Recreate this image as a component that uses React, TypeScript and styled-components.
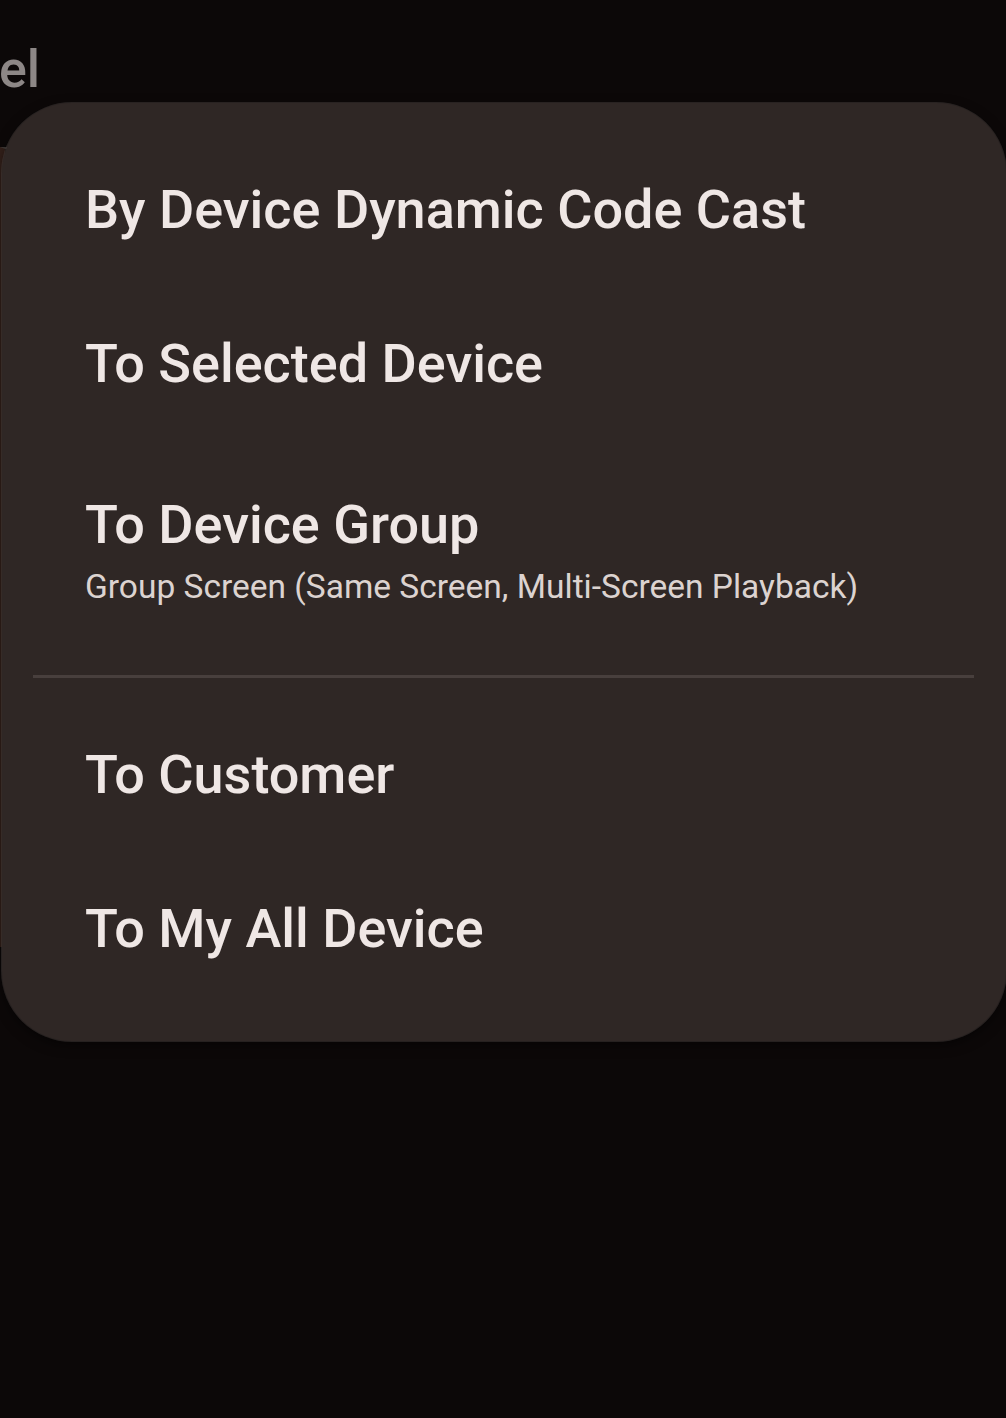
import React from 'react';
import styled, { createGlobalStyle } from 'styled-components';

const GlobalStyle = createGlobalStyle`
  html, body {
    margin: 0;
    padding: 0;
    background: #0c0808;
    overflow: hidden;
  }
  * {
    box-sizing: border-box;
  }
`;

interface MenuEntry {
  title: string;
  subtitle?: string;
  dividerAfter?: boolean;
}

const entries: MenuEntry[] = [
  { title: 'By Device Dynamic Code Cast' },
  { title: 'To Selected Device' },
  {
    title: 'To Device Group',
    subtitle: 'Group Screen (Same Screen, Multi-Screen Playback)',
    dividerAfter: true,
  },
  { title: 'To Customer' },
  { title: 'To My All Device' },
];

const App: React.FC = () => {
  return (
    <Page>
      <GlobalStyle />
      <Behind>
        <TopBar>
          <ActionClip>
            <ActionLabel>Cancel</ActionLabel>
          </ActionClip>
        </TopBar>
        <BehindCard />
      </Behind>

      <Menu role="menu">
        {entries.map(entry => (
          <React.Fragment key={entry.title}>
            <MenuItem role="menuitem" $withSub={!!entry.subtitle}>
              <ItemTitle>{entry.title}</ItemTitle>
              {entry.subtitle && <ItemSub>{entry.subtitle}</ItemSub>}
            </MenuItem>
            {entry.dividerAfter && <Divider />}
          </React.Fragment>
        ))}
      </Menu>
    </Page>
  );
};

export default App;

const Page = styled.div`
  position: relative;
  width: 1006px;
  height: 1418px;
  background: #0c0808;
  font-family: Roboto, 'Noto Sans', 'Liberation Sans', sans-serif;
  overflow: hidden;
`;

const Behind = styled.div`
  display: flex;
  flex-direction: column;
`;

const TopBar = styled.div`
  height: 147px;
  padding-top: 42px;
`;

const ActionClip = styled.div`
  width: 40px;
  display: flex;
  justify-content: flex-end;
  overflow: hidden;
`;

const ActionLabel = styled.span`
  font-size: 52px;
  line-height: 56px;
  font-weight: 500;
  color: #8d8786;
  white-space: nowrap;
`;

const BehindCard = styled.div`
  width: 900px;
  height: 800px;
  border-top: 2px solid #3e3836;
  border-left: 5px solid #33201a;
  background: #0e0a09;
`;

const Menu = styled.div`
  position: absolute;
  top: 103px;
  left: 2px;
  width: 1004px;
  height: 938px;
  padding: 29.5px 0 35.5px;
  border-radius: 70px;
  background: #2f2725;
  box-shadow: 0 0 0 1px rgba(70, 62, 60, 0.5), 0 4px 12px rgba(0, 0, 0, 0.5);
  display: flex;
  flex-direction: column;
`;

const MenuItem = styled.div<{ $withSub: boolean }>`
  display: flex;
  flex-direction: column;
  justify-content: ${p => (p.$withSub ? 'flex-start' : 'center')};
  height: ${p => (p.$withSub ? '199.5px' : '154px')};
  padding: ${p => (p.$withSub ? '52px 0 0 83px' : '0 0 0 83px')};
  gap: 12px;
`;

const ItemTitle = styled.div`
  font-size: 54px;
  line-height: 64px;
  font-weight: 500;
  color: #efe7e5;
  white-space: nowrap;
`;

const ItemSub = styled.div`
  font-size: 33.5px;
  line-height: 36px;
  font-weight: 400;
  color: #dcd3d0;
  white-space: nowrap;
`;

const Divider = styled.div`
  height: 3px;
  margin: 34.5px 32px 20px 31px;
  background: #483f3d;
  flex-shrink: 0;
`;
